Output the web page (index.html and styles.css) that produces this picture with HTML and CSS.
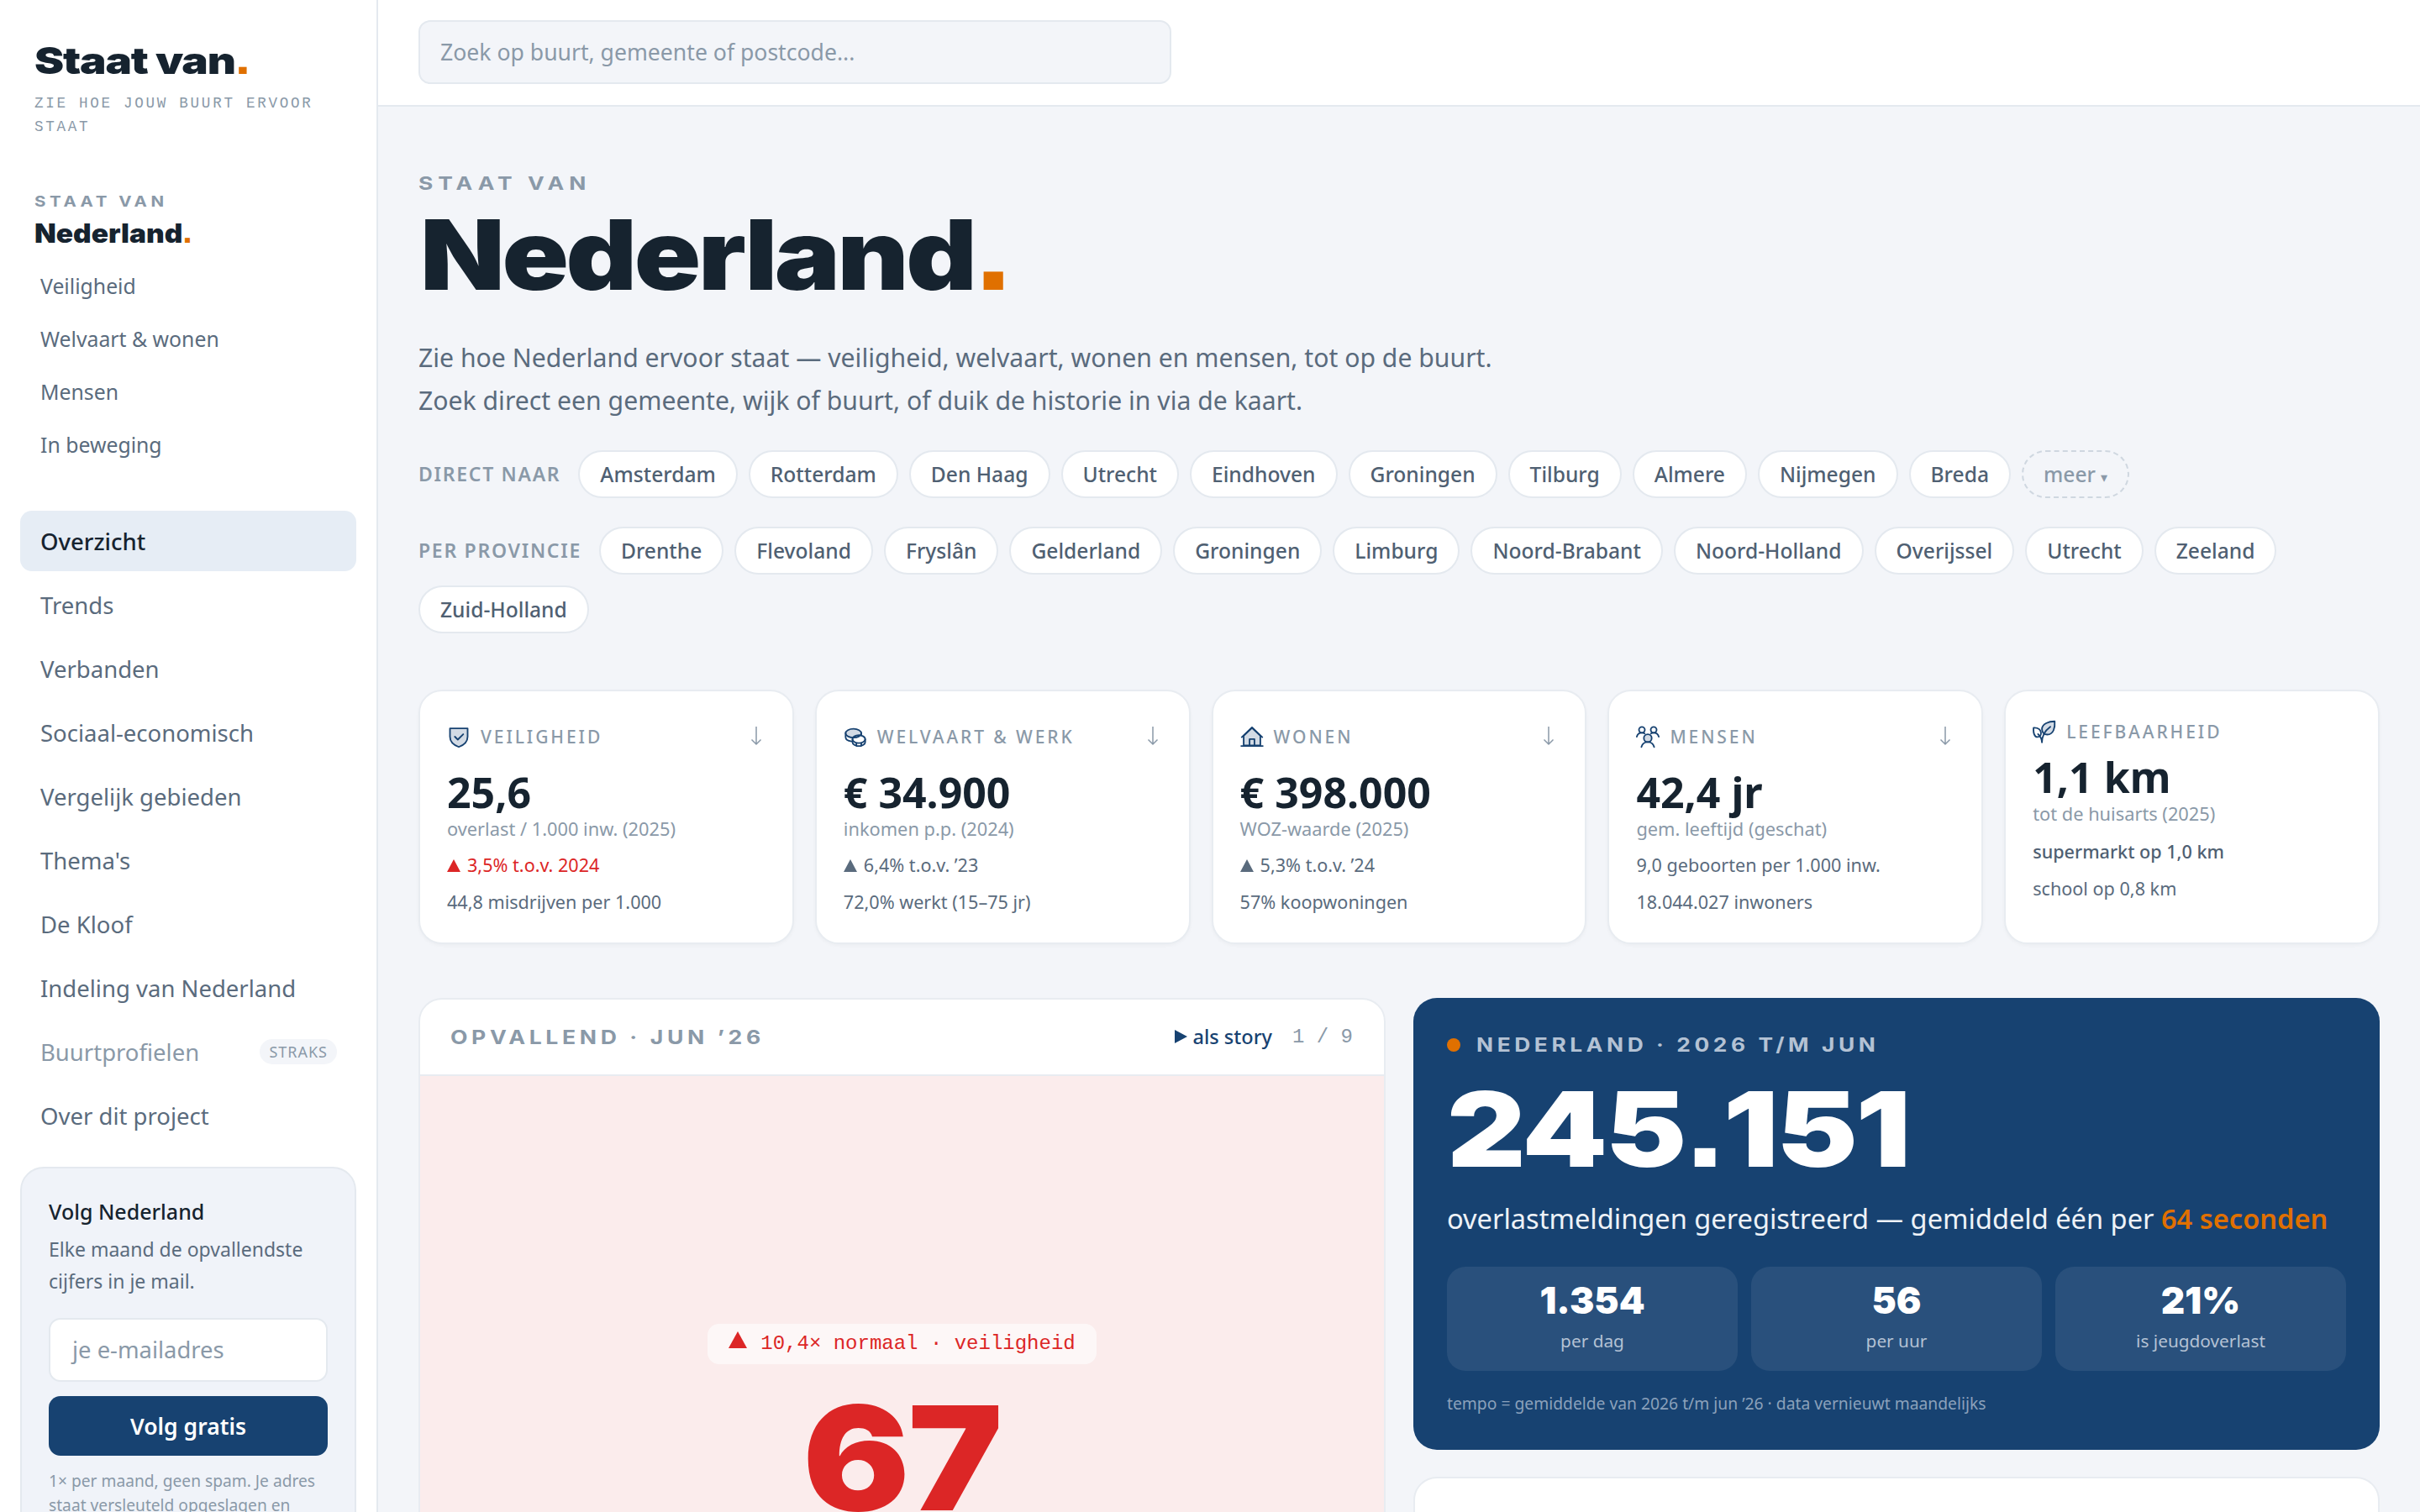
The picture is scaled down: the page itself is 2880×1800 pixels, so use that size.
FILE: index.html
```html
<!DOCTYPE html>
<html lang="nl">
<head>
    <meta charset="UTF-8">
    <meta name="viewport" content="width=device-width, initial-scale=1.0">
    <title>Staat van Nederland</title>
    <link rel="stylesheet" href="styles.css">
</head>
<body>
<div class="app">
    <aside class="sidebar">
        <div class="brand"><span class="wide">Staat van<i>.</i></span></div>
        <p class="tagline">ZIE HOE JOUW BUURT ERVOOR STAAT</p>

        <div class="scope-label"><span class="caps">STAAT VAN</span></div>
        <div class="scope-name"><span class="wide">Nederland<i>.</i></span></div>
        <nav class="subnav">
            <a>Veiligheid</a>
            <a>Welvaart &amp; wonen</a>
            <a>Mensen</a>
            <a>In beweging</a>
        </nav>

        <nav class="mainnav">
            <a class="active">Overzicht</a>
            <a>Trends</a>
            <a>Verbanden</a>
            <a>Sociaal-economisch</a>
            <a>Vergelijk gebieden</a>
            <a>Thema's</a>
            <a>De Kloof</a>
            <a>Indeling van Nederland</a>
            <a class="muted">Buurtprofielen <span class="badge">STRAKS</span></a>
            <a>Over dit project</a>
        </nav>

        <div class="follow">
            <h3>Volg Nederland</h3>
            <p>Elke maand de opvallendste cijfers in je mail.</p>
            <div class="follow-input">je e-mailadres</div>
            <button class="follow-btn">Volg gratis</button>
            <small>1× per maand, geen spam. Je adres staat versleuteld opgeslagen en wordt nooit gedeeld.</small>
        </div>
    </aside>

    <div class="content">
        <header class="topbar">
            <div class="search">Zoek op buurt, gemeente of postcode...</div>
        </header>

        <main class="page">
            <div class="eyebrow"><span class="caps">STAAT VAN</span></div>
            <h1 class="title"><span class="wide">Nederland<i>.</i></span></h1>
            <p class="lead">Zie hoe Nederland ervoor staat — veiligheid, welvaart, wonen en mensen, tot op de buurt.<br>Zoek direct een gemeente, wijk of buurt, of duik de historie in via de kaart.</p>

            <div class="chips">
                <span class="chips-label">DIRECT NAAR</span>
                <a class="chip">Amsterdam</a>
                <a class="chip">Rotterdam</a>
                <a class="chip">Den Haag</a>
                <a class="chip">Utrecht</a>
                <a class="chip">Eindhoven</a>
                <a class="chip">Groningen</a>
                <a class="chip">Tilburg</a>
                <a class="chip">Almere</a>
                <a class="chip">Nijmegen</a>
                <a class="chip">Breda</a>
                <a class="chip more">meer <em>▾</em></a>
            </div>
            <div class="chips chips-prov">
                <span class="chips-label">PER PROVINCIE</span>
                <a class="chip">Drenthe</a>
                <a class="chip">Flevoland</a>
                <a class="chip">Fryslân</a>
                <a class="chip">Gelderland</a>
                <a class="chip">Groningen</a>
                <a class="chip">Limburg</a>
                <a class="chip">Noord-Brabant</a>
                <a class="chip">Noord-Holland</a>
                <a class="chip">Overijssel</a>
                <a class="chip">Utrecht</a>
                <a class="chip">Zeeland</a>
                <a class="chip">Zuid-Holland</a>
            </div>

            <section class="cards">
                <article class="card">
                    <div class="card-head">
                        <svg class="icon" viewBox="0 0 24 24"><path class="duo" d="M3 3.500h18V12c0 6-5 9-9 10.500C8 21 3 18 3 12z"/><path d="M8 12l3 3 5.500-5.500"/></svg>
                        <span>VEILIGHEID</span>
                        <svg class="arrow" viewBox="0 0 14 24"><path d="M7 1v21M1.500 16.500 7 22l5.500-5.500"/></svg>
                    </div>
                    <div class="value">25,6</div>
                    <div class="sub">overlast / 1.000 inw. (2025)</div>
                    <div class="line up"><b class="tri"></b>3,5% t.o.v. 2024</div>
                    <div class="line">44,8 misdrijven per 1.000</div>
                </article>
                <article class="card">
                    <div class="card-head">
                        <svg class="icon" viewBox="0 0 24 24"><ellipse class="duo" cx="10" cy="8.500" rx="8" ry="4.500"/><path d="M2 8.500v4c0 2 2.500 3.800 6 4.300M18 8.500v2"/><ellipse cx="15.500" cy="14.500" rx="6.500" ry="4"/><path d="M9 14.500v3c0 2.200 3 4 6.500 4s6.500-1.800 6.500-4v-3M13 18.500v3M18 18.500v3"/></svg>
                        <span>WELVAART &amp; WERK</span>
                        <svg class="arrow" viewBox="0 0 14 24"><path d="M7 1v21M1.500 16.500 7 22l5.500-5.500"/></svg>
                    </div>
                    <div class="value">€ 34.900</div>
                    <div class="sub">inkomen p.p. (2024)</div>
                    <div class="line"><b class="tri"></b>6,4% t.o.v. ’23</div>
                    <div class="line">72,0% werkt (15–75 jr)</div>
                </article>
                <article class="card">
                    <div class="card-head">
                        <svg class="icon" viewBox="0 0 24 24"><path class="duo" d="M3.500 11 12 3l8.500 8v10h-17z"/><path d="M1 21.500h22M9.500 21.500v-7h5v7M1.500 12.500 12 2.500l10.500 10"/></svg>
                        <span>WONEN</span>
                        <svg class="arrow" viewBox="0 0 14 24"><path d="M7 1v21M1.500 16.500 7 22l5.500-5.500"/></svg>
                    </div>
                    <div class="value">€ 398.000</div>
                    <div class="sub">WOZ-waarde (2025)</div>
                    <div class="line"><b class="tri"></b>5,3% t.o.v. ’24</div>
                    <div class="line">57% koopwoningen</div>
                </article>
                <article class="card">
                    <div class="card-head">
                        <svg class="icon" viewBox="0 0 24 24"><circle class="duo" cx="12" cy="13.500" r="4"/><path d="M5.500 22.500c.8-3 3.400-5 6.500-5s5.700 2 6.500 5"/><circle cx="6" cy="5" r="3"/><circle cx="18" cy="5" r="3"/><path d="M.8 12c.6-2.400 2.700-4 5.200-4 1 0 2 .3 2.800.8M23.200 12c-.6-2.400-2.700-4-5.200-4-1 0-2 .3-2.800.8"/></svg>
                        <span>MENSEN</span>
                        <svg class="arrow" viewBox="0 0 14 24"><path d="M7 1v21M1.500 16.500 7 22l5.500-5.500"/></svg>
                    </div>
                    <div class="value">42,4 jr</div>
                    <div class="sub">gem. leeftijd (geschat)</div>
                    <div class="line">9,0 geboorten per 1.000 inw.</div>
                    <div class="line">18.044.027 inwoners</div>
                </article>
                <article class="card">
                    <div class="card-head short">
                        <svg class="icon" viewBox="0 0 24 24"><path class="duo" d="M22.500 1.500c.5 6-1 13.500-7.500 13.500-3.500 0-5.500-2.500-5.500-5.500 0-5.500 7-8 13-8z"/><path d="M1 8c4-.2 7 1.500 7.500 5 .3 2.800-1.500 4.500-3.500 4.500-3.500 0-4.500-5-4-9.500zM9.500 23c0-7 3-12 8.500-16M9.500 23c0-2-.5-5-4-8.500"/></svg>
                        <span>LEEFBAARHEID</span>
                    </div>
                    <div class="value">1,1 km</div>
                    <div class="sub">tot de huisarts (2025)</div>
                    <div class="line strong">supermarkt op 1,0 km</div>
                    <div class="line">school op 0,8 km</div>
                </article>
            </section>

            <section class="panels">
                <article class="story">
                    <div class="story-head">
                        <span class="story-title"><span class="caps">OPVALLEND · JUN ’26</span></span>
                        <span class="story-tools"><a><b class="play"></b>als story</a><span class="count">1 / 9</span></span>
                    </div>
                    <div class="story-body">
                        <div class="tag"><b class="tri big"></b>10,4× normaal · veiligheid</div>
                        <div class="big-num"><span class="wide">67</span></div>
                    </div>
                </article>

                <div class="side-col">
                    <article class="hero">
                        <div class="hero-top"><b class="dot"></b><span class="caps">NEDERLAND · 2026 T/M JUN</span></div>
                        <div class="hero-num"><span class="wide">245<u>.</u>151</span></div>
                        <p class="hero-text">overlastmeldingen geregistreerd — gemiddeld één per <strong>64 seconden</strong></p>
                        <div class="stats">
                            <div class="stat"><b>1.354</b><span>per dag</span></div>
                            <div class="stat"><b>56</b><span>per uur</span></div>
                            <div class="stat"><b>21%</b><span>is jeugdoverlast</span></div>
                        </div>
                        <p class="hero-note">tempo = gemiddelde van 2026 t/m jun ’26 · data vernieuwt maandelijks</p>
                    </article>
                    <article class="next-card"></article>
                </div>
            </section>
        </main>
    </div>
</div>
</body>
</html>
```

FILE: styles.css
```css
* {
    margin: 0;
    padding: 0;
    box-sizing: border-box;
}

html, body {
    height: 100%;
    overflow: hidden;
}

body {
    font-family: "Noto Sans", "Open Sans", sans-serif;
    color: #16232f;
    background: #f3f5f9;
}

.app {
    display: flex;
    height: 100vh;
    overflow: hidden;
}

/* stretched display type */
.wide {
    display: inline-block;
    font-family: Inter, "Liberation Sans", sans-serif;
    font-weight: 900;
    white-space: nowrap;
    transform-origin: left center;
}

.wide i {
    font-family: "Liberation Sans", sans-serif;
    font-weight: 700;
    font-style: normal;
    font-size: 1.25em;
    line-height: 0;
    color: #e07000;
}

.wide u {
    font-family: "Liberation Sans", sans-serif;
    font-weight: 700;
    font-size: 1.2em;
    line-height: 0;
    text-decoration: none;
}

/* stretched small caps labels */
.caps {
    display: inline-block;
    font-family: Inter, "Liberation Sans", sans-serif;
    font-weight: 700;
    white-space: nowrap;
    transform-origin: left center;
}

/* sidebar */
.sidebar {
    flex: 0 0 450px;
    height: 100%;
    background: #fff;
    border-right: 2px solid #e4e9ef;
    padding: 45px 24px 0;
    overflow: hidden;
}

.brand {
    padding-left: 17px;
    font-size: 44px;
    line-height: 52px;
}

.brand .wide {
    letter-spacing: -1px;
    transform: scaleX(1.2);
}

.tagline {
    margin: 11px 0 0 17px;
    font-family: "Liberation Mono", monospace;
    font-size: 17.6px;
    line-height: 28px;
    letter-spacing: 2.7px;
    color: #8a99a8;
}

.scope-label {
    margin: 62px 0 0 17px;
    font-size: 18px;
    line-height: 24px;
    letter-spacing: 4px;
    color: #8a99a8;
}

.scope-label .caps {
    transform: scaleX(1.14);
}

.scope-name {
    margin-left: 17px;
    margin-top: 6px;
    font-size: 31px;
    line-height: 38px;
}

.scope-name .wide {
    transform: scaleX(1.08);
}

.subnav {
    display: flex;
    flex-direction: column;
    margin-top: 12px;
}

.subnav a {
    height: 63px;
    line-height: 63px;
    padding-left: 24px;
    font-size: 24.8px;
    color: #5a6b7d;
}

.mainnav {
    display: flex;
    flex-direction: column;
    gap: 4px;
    margin-top: 47px;
}

.mainnav a {
    display: flex;
    align-items: center;
    justify-content: space-between;
    height: 72px;
    padding: 0 24px;
    border-radius: 14px;
    font-size: 27.5px;
    color: #5a6b7d;
}

.mainnav a.active {
    background: #e6edf5;
    color: #16232f;
    font-weight: 500;
}

.mainnav a.muted {
    color: #8a99a8;
}

.badge {
    height: 30px;
    line-height: 30px;
    padding: 0 11px;
    border-radius: 15px;
    margin-right: -1px;
    background: #f3f5f9;
    font-size: 18px;
    letter-spacing: 1px;
    color: #8a99a8;
}

.follow {
    margin-top: 25px;
    height: 500px;
    padding: 32px 32px 0;
    background: #f0f3f9;
    border: 2px solid #e4e9ef;
    border-radius: 28px;
}

.follow h3 {
    font-size: 25px;
    line-height: 38px;
    font-weight: 500;
}

.follow p {
    margin-top: 7px;
    font-size: 23px;
    line-height: 38px;
    color: #5a6b7d;
}

.follow-input {
    margin-top: 25px;
    height: 76px;
    line-height: 72px;
    padding-left: 26px;
    background: #fff;
    border: 2px solid #e4e9ef;
    border-radius: 14px;
    font-size: 27.4px;
    color: #8a99a8;
}

.follow-btn {
    display: block;
    width: 100%;
    height: 71px;
    margin-top: 17px;
    border: 0;
    border-radius: 14px;
    background: #174271;
    color: #fff;
    font-family: inherit;
    font-weight: 600;
    font-size: 26.5px;
}

.follow small {
    display: block;
    margin-top: 15px;
    font-size: 19.2px;
    line-height: 29px;
    color: #8a99a8;
}

/* top bar */
.content {
    flex: 1;
    min-width: 0;
}

.topbar {
    height: 127px;
    padding: 24px 48px 0;
    background: #fff;
    border-bottom: 2px solid #e4e9ef;
}

.search {
    width: 896px;
    height: 76px;
    line-height: 72px;
    padding-left: 24px;
    background: #f3f5f9;
    border: 2px solid #e4e9ef;
    border-radius: 14px;
    font-size: 26.6px;
    color: #8a99a8;
}

.page {
    padding: 74px 48px 0;
}

.eyebrow {
    font-size: 22px;
    line-height: 32px;
    letter-spacing: 5px;
    color: #8a99a8;
}

.eyebrow .caps {
    transform: scaleX(1.2);
}

.title {
    margin-top: 2px;
    font-size: 116px;
    line-height: 128px;
    color: #16232f;
}

.title .wide {
    letter-spacing: -3px;
    transform: scaleX(1.13);
    margin-left: 2px;
}

.lead {
    margin-top: 33px;
    font-size: 30.2px;
    line-height: 51.4px;
    color: #5a6b7d;
}

.chips {
    display: flex;
    flex-wrap: wrap;
    align-items: center;
    gap: 13px;
    margin-top: 33px;
}

.chips-prov {
    margin-top: 34px;
}

.chips-label {
    font-size: 23px;
    font-weight: 600;
    letter-spacing: 1.700px;
    color: #8a99a8;
    margin-right: 8px;
}

.chip {
    height: 57px;
    line-height: 53px;
    padding: 0 24px;
    background: #fff;
    border: 2px solid #e4e9ef;
    border-radius: 29px;
    font-size: 24.6px;
    font-weight: 500;
    color: #4f6072;
}

.chip.more {
    background: transparent;
    border: 2px dashed #cfd7e0;
    color: #8a99a8;
}

.chip em {
    font-style: normal;
    font-size: 16px;
}

/* stat cards */
.cards {
    display: grid;
    grid-template-columns: repeat(5, 1fr);
    gap: 25px;
    margin-top: 67px;
}

.card {
    height: 303px;
    padding: 40px 32px 0;
    background: #fff;
    border: 2px solid #e8ecf1;
    border-radius: 28px;
    box-shadow: 0 2px 4px rgba(22, 35, 47, .03);
}

.card-head {
    display: flex;
    align-items: flex-start;
    gap: 12px;
    height: 52px;
    font-size: 21px;
    font-weight: 500;
    letter-spacing: 2.900px;
    line-height: 28px;
    color: #8a99a8;
}

.card-head.short {
    height: 40px;
    margin-top: -6px;
}

.card-head span {
    flex: 1;
    white-space: nowrap;
}

.icon {
    flex: none;
    width: 28px;
    height: 28px;
    fill: none;
    stroke: #174271;
    stroke-width: 1.600;
    stroke-linejoin: round;
    stroke-linecap: round;
}

.icon .duo {
    fill: #d3dbe5;
}

.arrow {
    flex: none;
    width: 14px;
    height: 24px;
    margin-top: 1px;
    margin-right: 4px;
    fill: none;
    stroke: #8a99a8;
    stroke-width: 1.500;
}

.value {
    margin-top: 1px;
    font-size: 50px;
    font-weight: 700;
    line-height: 55px;
    white-space: nowrap;
}

.sub {
    font-size: 21.800px;
    line-height: 32px;
    color: #8a99a8;
    white-space: nowrap;
}

.line {
    margin-top: 14px;
    font-size: 21.600px;
    line-height: 30px;
    color: #5a6b7d;
    white-space: nowrap;
}

.sub + .line {
    margin-top: 12px;
}

.sub + .line.strong {
    margin-top: 14px;
}

.line.up {
    color: #dc2626;
}

.line.strong {
    font-weight: 500;
    color: #4f6072;
}

.tri {
    display: inline-block;
    width: 0;
    height: 0;
    margin-right: 8px;
    border-left: 8px solid transparent;
    border-right: 8px solid transparent;
    border-bottom: 15px solid currentColor;
}

.tri.big {
    margin-right: 16px;
    border-left-width: 11px;
    border-right-width: 11px;
    border-bottom-width: 20px;
    vertical-align: 1px;
}

/* bottom panels */
.panels {
    display: grid;
    grid-template-columns: 1151px 1150px;
    gap: 33px;
    margin-top: 64px;
}

.story {
    height: 760px;
    background: #fff;
    border: 2px solid #e8ecf1;
    border-radius: 28px 28px 0 0;
    overflow: hidden;
}

.story-head {
    display: flex;
    align-items: center;
    justify-content: space-between;
    height: 91px;
    padding: 0 37px 0 36px;
    border-bottom: 2px solid #e8ecf1;
}

.story-title {
    font-size: 23px;
    letter-spacing: 4px;
    color: #8a99a8;
}

.story-title .caps {
    transform: scaleX(1.155);
}

.story-tools {
    display: flex;
    align-items: center;
    gap: 24px;
    font-size: 23.5px;
    font-weight: 500;
    color: #174271;
}

.story-tools a {
    display: flex;
    align-items: center;
}

.play {
    width: 0;
    height: 0;
    margin-right: 7px;
    border-top: 8px solid transparent;
    border-bottom: 8px solid transparent;
    border-left: 15px solid #174271;
}

.count {
    font-family: "Liberation Mono", monospace;
    font-weight: 400;
    font-size: 24px;
    color: #8a99a8;
}

.story-body {
    height: 668px;
    background: #fbecec;
    padding-top: 295px;
    text-align: center;
    color: #dc2626;
}

.tag {
    display: inline-block;
    height: 48px;
    line-height: 48px;
    padding: 0 25px;
    background: rgba(255, 255, 255, .6);
    border-radius: 14px;
    font-family: "Liberation Mono", monospace;
    font-size: 24px;
}

.big-num {
    margin-top: 12px;
    font-size: 172px;
    line-height: 190px;
    letter-spacing: -2px;
}

.big-num .wide {
    transform: scaleX(1.1);
    transform-origin: center;
}

.side-col {
    display: flex;
    flex-direction: column;
    gap: 32px;
}

.hero {
    height: 538px;
    padding: 40px 40px 0;
    background: #174271;
    border-radius: 28px;
    color: #fff;
}

.hero-top {
    display: flex;
    align-items: center;
    font-size: 23px;
    line-height: 32px;
    letter-spacing: 4px;
    color: #b4c2d4;
}

.hero-top .caps {
    transform: scaleX(1.145);
}

.dot {
    width: 16px;
    height: 16px;
    margin-right: 19px;
    border-radius: 50%;
    background: #e07000;
}

.hero-num {
    margin-top: 15px;
    font-size: 124px;
    line-height: 132px;
}

.hero-num .wide {
    letter-spacing: -2px;
    transform: scaleX(1.17);
}

.hero-text {
    margin-top: 16px;
    font-size: 32.6px;
    line-height: 50px;
    white-space: nowrap;
    color: #eef2f7;
}

.hero-text strong {
    font-weight: 600;
    color: #e07000;
}

.stats {
    display: grid;
    grid-template-columns: repeat(3, 346px);
    gap: 16px;
    margin-top: 32px;
}

.stat {
    height: 124px;
    padding-top: 14px;
    background: rgba(255, 255, 255, .08);
    border-radius: 22px;
    text-align: center;
}

.stat b {
    display: block;
    font-family: Inter, "Liberation Sans", sans-serif;
    font-weight: 900;
    font-size: 44px;
    line-height: 52px;
}

.stat span {
    display: block;
    margin-top: 7px;
    font-size: 20.8px;
    line-height: 30px;
    color: #b4c2d4;
}

.hero-note {
    margin-top: 24px;
    font-size: 19.3px;
    line-height: 30px;
    color: #8ba1bb;
}

.next-card {
    height: 120px;
    background: #fff;
    border: 2px solid #e8ecf1;
    border-radius: 28px;
}
```
